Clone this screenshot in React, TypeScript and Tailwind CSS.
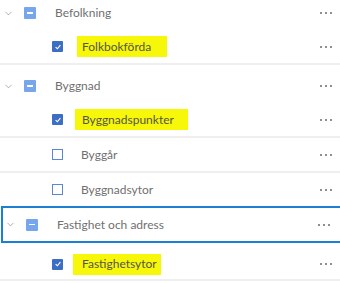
import { ChevronDown } from "lucide-react";

type Row =
  | { kind: "group"; label: string; focused?: boolean; first?: boolean }
  | { kind: "layer"; label: string; checked: boolean; mark?: string; line?: boolean; tall?: boolean };

const rows: Row[] = [
  { kind: "group", label: "Befolkning", first: true },
  { kind: "layer", label: "Folkbokförda", checked: true, mark: "ml-[14px] pl-[5px] w-[90px]", line: true },
  { kind: "group", label: "Byggnad" },
  { kind: "layer", label: "Byggnadspunkter", checked: true, mark: "ml-[12px] pl-[7px] w-[113px]", line: true },
  { kind: "layer", label: "Byggår", checked: false, line: true },
  { kind: "layer", label: "Byggnadsytor", checked: false },
  { kind: "group", label: "Fastighet och adress", focused: true },
  { kind: "layer", label: "Fastighetsytor", checked: true, mark: "ml-[10px] pl-[9px] w-[88px]", line: true, tall: true },
];

function Dots() {
  return (
    <div className="ml-auto mr-[8px] flex gap-[3px]">
      <span className="w-[2px] h-[2px] rounded-full bg-[#6a6a6a]" />
      <span className="w-[2px] h-[2px] rounded-full bg-[#6a6a6a]" />
      <span className="w-[2px] h-[2px] rounded-full bg-[#6a6a6a]" />
    </div>
  );
}

function GroupRow({ label, focused, first }: { label: string; focused?: boolean; first?: boolean }) {
  let box = "flex items-center h-[38px] pt-[4px]";
  if (first) box = "flex items-center h-[34px]";
  if (focused) box = "flex items-center h-[37px] ml-[1px] -mr-[4px] border-2 border-[#1b7fd4]";
  return (
    <div className={box}>
      <ChevronDown
        className={focused ? "w-[11px] h-[11px] ml-[2px] text-[#8c8c8c]" : "w-[11px] h-[11px] ml-[3px] text-[#8c8c8c]"}
        strokeWidth={1.5}
      />
      <div className="ml-[10px] w-[12px] h-[12px] rounded-[1px] bg-[#78a6ec] flex items-center justify-center">
        <span className="w-[6px] h-[1.5px] bg-white" />
      </div>
      <span className="ml-[19px] text-[12px] text-[#707070]">{label}</span>
      <div className={focused ? "ml-auto mr-[4px]" : "ml-auto"}>
        <Dots />
      </div>
    </div>
  );
}

function LayerRow({
  label,
  checked,
  mark,
  line,
  tall,
}: {
  label: string;
  checked: boolean;
  mark?: string;
  line?: boolean;
  tall?: boolean;
}) {
  return (
    <div className={line ? "border-b-2 border-[#efefef]" : ""}>
      <div className={tall ? "flex items-center h-[36px] pt-[6px]" : "flex items-center h-[33px]"}>
        {checked ? (
          <div className="ml-[52px] w-[11px] h-[11px] rounded-[1px] bg-[#3c6fc4] flex items-center justify-center">
            <svg viewBox="0 0 10 10" className="w-[8px] h-[8px]">
              <path d="M2 5.2 L4.2 7.2 L8 2.8" fill="none" stroke="white" strokeWidth="1.4" />
            </svg>
          </div>
        ) : (
          <div className="ml-[52px] w-[11px] h-[11px] border border-[#5b86d0] bg-white" />
        )}
        {mark ? (
          <span className={`${mark} h-[21px] flex items-center bg-[#f7f70a] text-[12px] text-[#55553f]`}>
            {label}
          </span>
        ) : (
          <span className="ml-[18px] text-[12px] text-[#707070]">{label}</span>
        )}
        <Dots />
      </div>
    </div>
  );
}

export default function App() {
  return (
    <div className="w-[340px] h-[283px] overflow-hidden bg-white font-['Lato',sans-serif]">
      <div className="-mt-[4px]">
        {rows.map((r) =>
          r.kind === "group" ? (
            <GroupRow key={r.label} label={r.label} focused={r.focused} first={r.first} />
          ) : (
            <LayerRow
              key={r.label}
              label={r.label}
              checked={r.checked}
              mark={r.mark}
              line={r.line}
              tall={r.tall}
            />
          )
        )}
      </div>
    </div>
  );
}
